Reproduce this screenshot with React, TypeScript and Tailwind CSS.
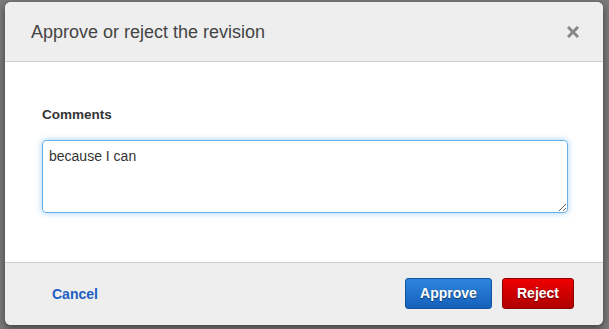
import React, { useState } from 'react';

export default function App() {
  const [comment, setComment] = useState('because I can');

  return (
    <div className="w-[609px] h-[329px] bg-[#7b7b7b] pl-[5px] pt-[2px] font-['Liberation_Sans',Arial,sans-serif]">
      <div className="w-[598px] h-[323px] bg-white rounded-[6px] overflow-hidden shadow-[0_3px_8px_rgba(0,0,0,0.5)] flex flex-col">
        <div className="h-[60px] bg-[#eeeeee] border-b border-[#cfcfcf] flex items-center justify-between pl-[26px] pr-[24px]">
          <h3 className="text-[18px] text-[#444] leading-none pt-[1px]">Approve or reject the revision</h3>
          <button className="text-[#888] leading-none">
            <svg width="12" height="12" viewBox="0 0 12 12">
              <path d="M2 2 L10 10 M10 2 L2 10" stroke="#888" strokeWidth="3" strokeLinecap="square" />
            </svg>
          </button>
        </div>
        <div className="flex-1 bg-white px-[37px] pt-[45px]">
          <label className="block text-[13.5px] leading-[16px] font-bold text-[#333] mb-[17px]">Comments</label>
          <textarea
            value={comment}
            onChange={(e) => setComment(e.target.value)}
            className="w-[526px] h-[73px] block rounded-[4px] border border-[#66afe9] shadow-[0_0_6px_rgba(102,175,233,0.6)] px-[6px] py-[5px] text-[14px] text-[#333] outline-none resize-y font-['Liberation_Sans',Arial,sans-serif]"
          />
        </div>
        <div className="h-[63px] bg-[#eeeeee] border-t border-[#cfcfcf] flex items-center justify-between pl-[47px] pr-[29px]">
          <a href="#" className="text-[14px] font-bold text-[#1d5fc2]">Cancel</a>
          <div className="flex gap-[10px] pb-[2px]">
            <button className="w-[87px] h-[31px] rounded-[3px] border border-[#12539e] bg-gradient-to-b from-[#2e86dd] to-[#1560bb] text-white text-[14px] font-bold [text-shadow:0_1px_1px_rgba(0,0,0,0.5)]">
              Approve
            </button>
            <button className="w-[72px] h-[31px] rounded-[3px] border border-[#8e0000] bg-gradient-to-b from-[#ee0000] to-[#b00000] text-white text-[14px] font-bold [text-shadow:0_1px_1px_rgba(0,0,0,0.5)]">
              Reject
            </button>
          </div>
        </div>
      </div>
    </div>
  );
}
